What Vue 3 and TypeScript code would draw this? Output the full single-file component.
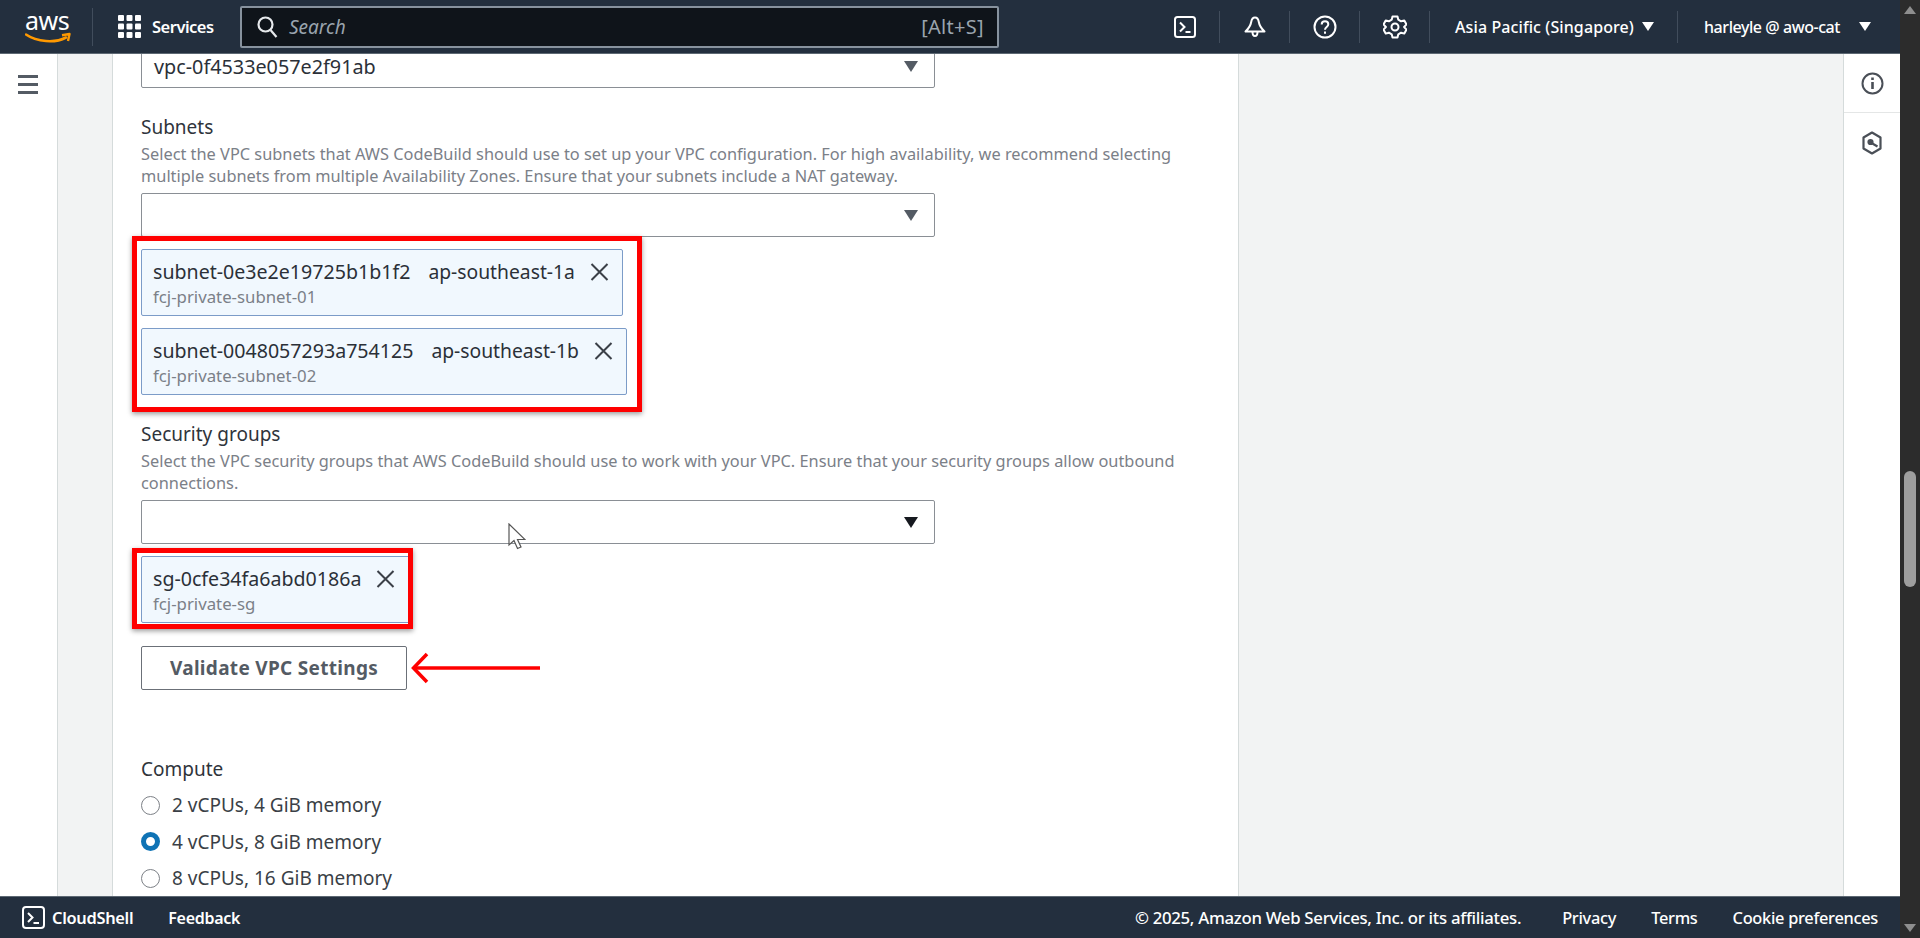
<script setup lang="ts">
interface Chip { id: string; zone?: string; name: string }
const subnets: Chip[] = [
  { id: 'subnet-0e3e2e19725b1b1f2', zone: 'ap-southeast-1a', name: 'fcj-private-subnet-01' },
  { id: 'subnet-0048057293a754125', zone: 'ap-southeast-1b', name: 'fcj-private-subnet-02' },
]
const groups: Chip[] = [{ id: 'sg-0cfe34fa6abd0186a', name: 'fcj-private-sg' }]
const radios = [
  { label: '2 vCPUs, 4 GiB memory', on: false },
  { label: '4 vCPUs, 8 GiB memory', on: true },
  { label: '8 vCPUs, 16 GiB memory', on: false },
]
</script>

<template>
  <div class="page">
    <div class="window">
      <header class="top">
        <div class="logo">
          <span class="logo-text">aws</span>
          <svg class="smile" width="46" height="13" viewBox="0 0 46 13"><path d="M1 2.5C12 10 30 11.5 41 5.5" fill="none" stroke="#f90" stroke-width="2.6" stroke-linecap="round"/><path d="M37 3.2L44.5 2 43 9" fill="none" stroke="#f90" stroke-width="2.4" stroke-linejoin="round"/></svg>
        </div>
        <div class="services">
          <svg width="23" height="23" viewBox="0 0 23 23" fill="#fff"><rect x="0" y="0" width="6" height="6" rx="1"/><rect x="8.5" y="0" width="6" height="6" rx="1"/><rect x="17" y="0" width="6" height="6" rx="1"/><rect x="0" y="8.5" width="6" height="6" rx="1"/><rect x="8.5" y="8.5" width="6" height="6" rx="1"/><rect x="17" y="8.5" width="6" height="6" rx="1"/><rect x="0" y="17" width="6" height="6" rx="1"/><rect x="8.5" y="17" width="6" height="6" rx="1"/><rect x="17" y="17" width="6" height="6" rx="1"/></svg>
          <span>Services</span>
        </div>
        <div class="search">
          <svg width="21" height="22" viewBox="0 0 21 22" fill="none" stroke="#e6e9ec" stroke-width="2.2"><circle cx="8.5" cy="8.5" r="7"/><path d="M13.5 14l6 7"/></svg>
          <span class="search-ph">Search</span>
          <span class="search-key">[Alt+S]</span>
        </div>
        <div class="tools">
          <div class="tool">
            <svg width="22" height="22" viewBox="0 0 22 22" fill="none" stroke="#fff" stroke-width="2"><rect x="1" y="1" width="20" height="20" rx="2.5"/><path d="M6 6.5l4.5 4.5L6 15.5M11.5 16h5"/></svg>
          </div>
          <div class="tool">
            <svg width="24" height="24" viewBox="0 0 24 24" fill="none" stroke="#fff" stroke-width="2" stroke-linejoin="round"><path d="M12 2.5c-2.6 0-3.4 2-3.800 4.500-.5 3-2 6-5.700 9.500h19c-3.700-3.500-5.200-6.500-5.700-9.500-.4-2.500-1.200-4.500-3.800-4.500z"/><path d="M9.500 17c0 2 1 4 2.500 4s2.500-2 2.500-4"/></svg>
          </div>
          <div class="tool">
            <svg width="24" height="24" viewBox="0 0 24 24" fill="none" stroke="#fff" stroke-width="2"><circle cx="12" cy="12" r="10.500"/><path d="M8.700 9.500c0-2 1.500-3.200 3.300-3.200s3.300 1.200 3.300 3c0 2.700-3.300 2.600-3.300 5.400"/><path d="M12 16.500v2.200"/></svg>
          </div>
          <div class="tool">
            <svg width="24" height="24" viewBox="0 0 24 24" fill="none" stroke="#fff" stroke-width="2" stroke-linejoin="round"><path d="M9.500 1.500h5l.8 3.200 2.800 1.600 3.200-.9 2.200 4-2.400 2.600 2.400 2.600-2.200 4-3.200-.9-2.800 1.600-.8 3.200h-5l-.8-3.200-2.800-1.600-3.200.9-2.200-4L2.900 12 .5 9.400l2.200-4 3.200.9 2.800-1.600z"/><circle cx="12" cy="12" r="3.500"/></svg>
          </div>
        </div>
        <div class="menu region"><span>Asia Pacific (Singapore)</span><i class="caret"></i></div>
        <div class="menu user"><span>harleyle @ awo-cat</span><i class="caret"></i></div>
      </header>

      <div class="body">
        <nav class="nav">
          <div class="burger"><b></b><b></b><b></b></div>
        </nav>
        <main class="card">
          <div class="select first"><span>vpc-0f4533e057e2f91ab</span><i class="tri"></i></div>

          <div class="label sec">Subnets</div>
          <p class="help">Select the VPC subnets that AWS CodeBuild should use to set up your VPC configuration. For high availability, we recommend selecting multiple subnets from multiple Availability Zones. Ensure that your subnets include a NAT gateway.</p>
          <div class="select"><i class="tri"></i></div>
          <div class="chips">
            <div v-for="c in subnets" :key="c.id" class="chip">
              <div class="chip-main">
                <span>{{ c.id }}</span><span class="zone">{{ c.zone }}</span>
                <svg class="x" width="19" height="18" viewBox="0 0 19 18" fill="none" stroke="#3b4048" stroke-width="2"><path d="M1.500 1l16 16M17.500 1l-16 16"/></svg>
              </div>
              <div class="chip-sub">{{ c.name }}</div>
            </div>
            <div class="redbox subnets-box"></div>
          </div>

          <div class="label sec">Security groups</div>
          <p class="help">Select the VPC security groups that AWS CodeBuild should use to work with your VPC. Ensure that your security groups allow outbound connections.</p>
          <div class="select dark">
            <i class="tri"></i>
            <svg class="cursor" width="18" height="28" viewBox="0 0 18 28"><path d="M1 1v21l5-4.500 3.500 8 3.500-1.500-3.500-7.500H17z" fill="#fff" stroke="#555" stroke-width="1.200"/></svg>
          </div>
          <div class="chips">
            <div v-for="c in groups" :key="c.id" class="chip sg">
              <div class="chip-main">
                <span>{{ c.id }}</span>
                <svg class="x" width="19" height="18" viewBox="0 0 19 18" fill="none" stroke="#3b4048" stroke-width="2"><path d="M1.500 1l16 16M17.500 1l-16 16"/></svg>
              </div>
              <div class="chip-sub">{{ c.name }}</div>
            </div>
            <div class="redbox sg-box"></div>
          </div>

          <div class="action">
            <button class="btn">Validate VPC Settings</button>
            <svg class="arrow" width="130" height="32" viewBox="0 0 130 32" fill="none" stroke="#f00" stroke-width="3.500"><path d="M2 16h127"/><path d="M16 2L2.500 16 16 30"/></svg>
          </div>

          <div class="label compute">Compute</div>
          <label v-for="r in radios" :key="r.label" class="radio">
            <i class="dot" :class="{ on: r.on }"></i><span>{{ r.label }}</span>
          </label>
        </main>
        <div class="gutter"></div>
        <aside class="side">
          <div class="side-item">
            <svg width="23" height="23" viewBox="0 0 23 23" fill="none" stroke="#4a4f57" stroke-width="2"><circle cx="11.500" cy="11.500" r="10"/><path d="M11.500 10v7" stroke-width="2.600"/><path d="M11.500 5.500v2.500" stroke-width="2.600"/></svg>
          </div>
          <div class="side-item">
            <svg width="22" height="24" viewBox="0 0 22 24" fill="none" stroke="#4a4f57" stroke-width="2.200" stroke-linejoin="round"><path d="M11 1.500l8.500 5v11l-8.500 5-8.500-5v-11z"/><circle cx="9.500" cy="11" r="2" fill="#4a4f57"/><path d="M10.500 12l6 3.500"/></svg>
          </div>
        </aside>
      </div>

      <footer class="foot">
        <svg width="23" height="23" viewBox="0 0 23 23" fill="none" stroke="#fff" stroke-width="2"><rect x="1" y="1" width="21" height="21" rx="3"/><path d="M6 7l4.500 4.500L6 16M11.500 17h5.500"/></svg>
        <span class="foot-shell">CloudShell</span>
        <span class="foot-feed">Feedback</span>
        <span class="foot-copy">© 2025, Amazon Web Services, Inc. or its affiliates.</span>
        <span class="foot-link first-link">Privacy</span>
        <span class="foot-link">Terms</span>
        <span class="foot-link">Cookie preferences</span>
      </footer>
    </div>
    <div class="scrollbar">
      <i class="sb-up"></i>
      <div class="sb-track"><div class="sb-thumb"></div></div>
      <i class="sb-down"></i>
    </div>
  </div>
</template>

<style>
html, body { margin: 0; padding: 0; overflow: hidden; }
</style>

<style scoped>
.page { width: 1920px; height: 938px; display: flex; overflow: hidden; font-family: "Noto Sans", "Open Sans", sans-serif; color: #2b3038; }
.window { width: 1900px; display: flex; flex-direction: column; }

.top { height: 54px; flex: none; box-sizing: border-box; border-bottom: 1px solid #5d6873; background: #232f3e; color: #fff; display: flex; align-items: center; font-size: 16px; }
.logo { width: 93px; height: 38px; box-sizing: border-box; padding-left: 25px; border-right: 1px solid #414d5c; position: relative; flex: none; }
.logo-text { display: block; font-size: 25px; font-weight: 400; line-height: 26px; letter-spacing: -0.5px; margin-top: -1px; }
.smile { display: block; margin-top: -1px; }
.services { display: flex; align-items: center; gap: 11px; margin-left: 25px; width: 122px; flex: none; font-weight: 600; font-size: 16.5px; letter-spacing: -0.5px; }
.search { width: 759px; height: 42px; flex: none; box-sizing: border-box; border: 2px solid #87929e; border-radius: 2px; background: #0f141a; display: flex; align-items: center; padding: 0 13px 0 15px; }
.search-ph { margin-left: 11px; font-style: italic; color: #9aa4ae; font-size: 19px; }
.search-key { margin-left: auto; color: #9aa4ae; font-size: 20px; letter-spacing: .3px; }
.tools { display: flex; margin-left: 151px; flex: none; }
.tool { width: 70px; height: 32px; display: flex; align-items: center; justify-content: center; border-right: 1px solid #414d5c; box-sizing: border-box; }
.menu { height: 32px; display: flex; align-items: center; flex: none; font-weight: 500; }
.region { width: 248px; box-sizing: border-box; padding-left: 25px; border-right: 1px solid #414d5c; letter-spacing: .1px; }
.user { padding-left: 26px; letter-spacing: -.44px; }
.caret { display: inline-block; width: 0; height: 0; border-left: 6px solid transparent; border-right: 6px solid transparent; border-top: 9px solid #fff; margin-left: 8px; }
.user .caret { margin-left: 19px; }

.body { flex: 1; min-height: 0; display: flex; background: #f2f3f3; overflow: hidden; }
.nav { width: 57px; flex: none; background: #fff; border-right: 1px solid #d5dbdb; box-sizing: content-box; }
.burger { width: 20px; margin: 21px 0 0 18px; display: flex; flex-direction: column; gap: 5px; }
.burger b { display: block; height: 3px; background: #545b64; }
.card { margin-left: 54px; width: 1127px; flex: none; box-sizing: border-box; background: #fff; border-left: 1px solid #d5dbdb; border-right: 1px solid #d5dbdb; padding-left: 28px; font-size: 19px; }
.gutter { flex: 1; }
.side { width: 56px; flex: none; background: #fff; border-left: 1px solid #d5dbdb; }
.side-item { height: 58px; display: flex; align-items: center; justify-content: center; border-bottom: 1px solid #e4e6e6; }
.side-item + .side-item { border-bottom: 0; height: 60px; }

.select { position: relative; width: 794px; height: 44px; box-sizing: border-box; border: 1px solid #8a8f95; border-radius: 2px; background: #fff; display: flex; align-items: center; padding-left: 12px; font-size: 19.800px; }
.first { margin-top: -10px; }
.tri { position: absolute; right: 16px; top: 16px; width: 0; height: 0; border-left: 7px solid transparent; border-right: 7px solid transparent; border-top: 11px solid #545b64; }
.dark .tri { border-top-color: #16191f; }
.cursor { position: absolute; left: 366px; top: 22px; }

.label { line-height: 22px; font-size: 19px; color: #2f343b; }
.sec { margin-top: 28px; }
.help { margin: 5px 0 6px; width: 1045px; line-height: 22px; font-size: 16.350px; color: #7b8088; }
.chips { position: relative; margin-top: 12px; display: flex; flex-direction: column; align-items: flex-start; gap: 12px; }
.chip { height: 67px; box-sizing: border-box; padding: 11px 13px 0 11px; border: 1px solid #7c9cc8; border-radius: 2px; background: #f1f8fe; }
.chip-main { display: flex; align-items: center; line-height: 22px; font-size: 19.600px; color: #2b3038; }
.zone { margin-left: 18px; font-size: 19.300px; }
.x { margin-left: 15px; }
.chip-sub { margin-top: 5px; line-height: 18px; font-size: 16.800px; color: #7b8088; }
.sg { width: 272px; }
.redbox { position: absolute; box-sizing: border-box; border: 5px solid #f00; box-shadow: 0 2px 5px rgba(0, 0, 0, .4); pointer-events: none; }
.subnets-box { left: -9px; top: -13px; width: 510px; height: 176px; }
.sg-box { left: -9px; top: -8px; width: 281px; height: 81px; }

.action { margin-top: 23px; display: flex; align-items: center; gap: 4px; }
.btn { width: 266px; height: 44px; box-sizing: border-box; border: 1px solid #6b7078; border-radius: 2px; background: #fff; font: 700 19px "Noto Sans", sans-serif; letter-spacing: .3px; color: #545b64; padding: 0; }

.compute { margin-top: 68px; }
.radio { display: flex; align-items: center; height: 36.500px; font-size: 19px; color: #3a3f46; }
.compute + .radio { margin-top: 7px; }
.dot { width: 19px; height: 19px; box-sizing: border-box; border: 1.500px solid #7d8187; border-radius: 50%; background: #fff; margin-right: 12px; flex: none; }
.dot.on { border: 5px solid #0f73b5; }

.foot { height: 42px; flex: none; box-sizing: border-box; border-top: 1px solid #5d6873; background: #232f3e; color: #fff; display: flex; align-items: center; padding-left: 22px; font-size: 16.400px; font-weight: 500; letter-spacing: -0.3px; }
.foot-shell { margin-left: 7px; font-size: 16.400px; font-weight: 600; }
.foot-feed { margin-left: 35px; font-size: 16px; font-weight: 600; }
.foot-copy { margin-left: auto; font-size: 16.800px; }
.foot-link { margin-left: 35px; }
.first-link { margin-left: 41px; }
.foot-link:last-child { margin-right: 22px; }

.scrollbar { width: 20px; flex: none; background: #2c2c2c; display: flex; flex-direction: column; align-items: center; position: relative; }
.sb-up, .sb-down { position: absolute; width: 0; height: 0; border-left: 6px solid transparent; border-right: 6px solid transparent; }
.sb-up { top: 6px; border-bottom: 8px solid #8e8e8e; }
.sb-down { bottom: 6px; border-top: 8px solid #8e8e8e; }
.sb-track { width: 100%; flex: 1; padding-top: 471px; box-sizing: border-box; }
.sb-thumb { width: 12px; height: 116px; margin: 0 auto; border-radius: 6px; background: #9e9e9e; }
</style>
